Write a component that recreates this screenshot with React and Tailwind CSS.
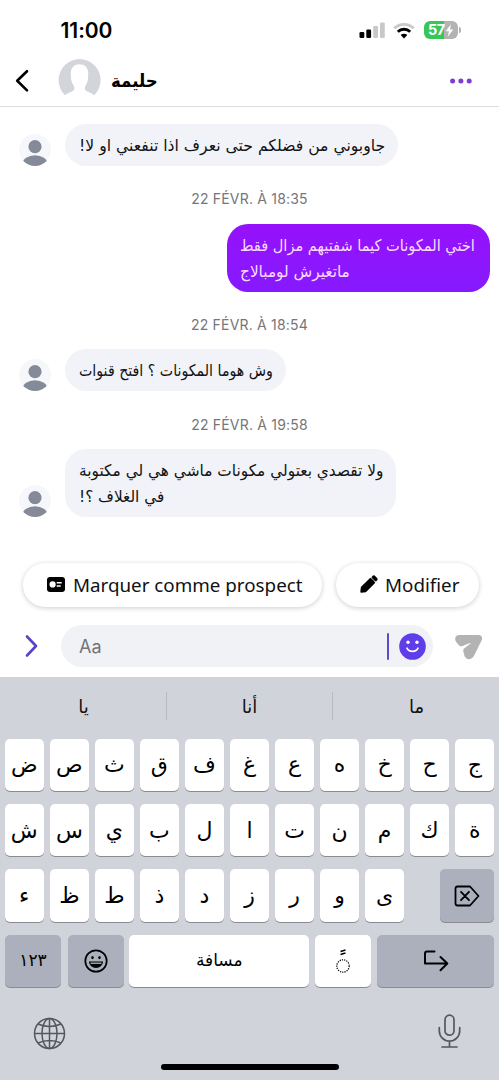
const AR = "font-['DejaVu_Sans',sans-serif]";

function Avatar() {
  return (
    <svg className="mb-0 h-8 w-8 shrink-0" viewBox="0 0 32 32">
      <defs>
        <clipPath id="avatarClip"><circle cx="16" cy="16" r="16" /></clipPath>
      </defs>
      <circle cx="16" cy="16" r="16" fill="#f5f7fa" />
      <g clipPath="url(#avatarClip)" fill="#858a98">
        <circle cx="16" cy="12.7" r="6.6" />
        <ellipse cx="16" cy="30" rx="12.5" ry="8.8" />
      </g>
    </svg>
  );
}

function Line({ children, className }) {
  return (
    <span dir="rtl" className={`block w-max origin-left whitespace-nowrap ${className}`}>{children}</span>
  );
}

function Stamp({ children, className }) {
  return (
    <div className={`flex h-5 items-center justify-center font-[Inter,sans-serif] text-[14px] tracking-[0.2px] text-[#75767a] ${className}`}>
      {children}
    </div>
  );
}

function Incoming({ children, className, bubble }) {
  return (
    <div className={`flex items-end gap-[14px] pl-[19px] ${className}`}>
      <Avatar />
      <div className={`flex flex-col items-start rounded-[21px] bg-[#f2f3f8] px-[14px] pt-[2px] text-[#111214] ${bubble}`}>{children}</div>
    </div>
  );
}

function Key({ children, className = "", inner = "", tone = "bg-white" }) {
  return (
    <div className={`flex h-[52.5px] items-center justify-center rounded-[5px] text-[22px] text-black shadow-[0_1px_0_#898b91] ${tone} ${className}`}>
      <span className={inner}>{children}</span>
    </div>
  );
}

const GRAY = "bg-[#abb0bc]";
const ROW1 = ["ض", "ص", "ث", "ق", "ف", "غ", "ع", "ه", "خ", "ح", "ج"];
const ROW2 = ["ش", "س", "ي", "ب", "ل", "ا", "ت", "ن", "م", "ك", "ة"];
const ROW3 = ["ء", "ظ", "ط", "ذ", "د", "ز", "ر", "و", "ى"];

export default function App() {
  return (
    <div className={`flex h-[1080px] w-[499px] flex-col overflow-hidden bg-white ${AR}`}>
      <div className="flex h-[60px] shrink-0 items-center justify-between pl-[60.5px] pr-[38px]">
        <span className="font-[Inter,sans-serif] text-[21px] font-semibold leading-none tracking-[-0.05px] text-black">11:00</span>
        <div className="flex items-center">
          <svg width="27" height="18" viewBox="0 0 27 18">
            <rect x="0.5" y="11" width="4.8" height="6" rx="1.2" fill="#000" />
            <rect x="7.3" y="8.5" width="4.8" height="8.5" rx="1.2" fill="#000" />
            <rect x="14.2" y="5" width="4.8" height="12" rx="1.2" fill="#c8c8c8" />
            <rect x="21" y="1.5" width="4.8" height="15.5" rx="1.2" fill="#c8c8c8" />
          </svg>
          <svg className="ml-[7px]" width="22" height="17" viewBox="0 0 22 17">
            <path d="M1.4 6.2a13.8 13.8 0 0 1 19.2 0" fill="none" stroke="#c8c8c8" strokeWidth="2.7" />
            <path d="M4.8 9.8a8.8 8.8 0 0 1 12.4 0" fill="none" stroke="#000" strokeWidth="2.8" />
            <path d="M11 16.4 7.7 13.1a4.7 4.7 0 0 1 6.6 0z" fill="#000" />
          </svg>
          <div className="ml-[9px] flex h-[18px] w-[34px] items-center overflow-hidden rounded-[6px] bg-linear-to-r from-[#36c759] from-58% to-[#b3b3b3] to-58% pl-[4px]">
            <span className="font-[Inter,sans-serif] text-[14.5px] font-bold leading-none tracking-[-0.4px] text-white">57</span>
            <svg width="9" height="13" viewBox="0 0 10 14"><path d="M6.5 0 .8 7.8h3.6L3 14l6.2-8.2H5.6z" fill="#fff" /></svg>
          </div>
          <div className="ml-px h-[6px] w-[2px] rounded-r-full bg-[#b3b3b3]" />
        </div>
      </div>

      <div className="flex h-[47px] shrink-0 items-start border-b border-[#dcdde0] pl-[14px] pr-[27px]">
        <svg className="mt-[9px]" width="16" height="24" viewBox="0 0 16 24">
          <path d="M13 2.2 3.2 11.8 13 21.4" fill="none" stroke="#000" strokeWidth="2.6" strokeLinecap="round" strokeLinejoin="round" />
        </svg>
        <svg className="ml-[28px] -mt-px" width="43" height="43" viewBox="0 0 43 43">
          <path d="M7 36.2A21 21 0 1 1 36.2 36.2C33.5 33.5 29.5 33 27.5 31.2C26.3 30 26.6 27.7 27.7 26.2C29.5 24 30.3 20.5 30.2 14C30.1 8 26.5 5.2 21.5 5.2S12.9 8 12.8 14C12.7 20.5 13.7 24 15.5 26.2C16.6 27.7 16.9 30 15.7 31.2C13.7 33 9.7 33.5 7 36.2Z" fill="#d2d5da" />
        </svg>
        <div className="ml-[10px] flex h-[40px] items-center text-[18px] font-bold text-black">
          <Line className="scale-x-[0.92]">حليمة</Line>
        </div>
        <svg className="ml-auto mt-[18px]" width="22" height="6" viewBox="0 0 22 6" fill="#7d3cd6">
          <circle cx="2.6" cy="3" r="2.5" /><circle cx="10.9" cy="3" r="2.5" /><circle cx="19.2" cy="3" r="2.5" />
        </svg>
      </div>

      <div className="flex h-[456px] shrink-0 flex-col">
        <Incoming className="mt-[17px]" bubble="h-[42px] w-[333px] justify-center">
          <Line className="scale-x-[0.977] text-[16px] leading-[26px]">جاوبوني من فضلكم حتى نعرف اذا تنفعني او لا!</Line>
        </Incoming>
        <Stamp className="mt-[22px]">22 FÉVR. À 18:35</Stamp>
        <div className="mr-[9px] mt-[16px] flex h-[68px] w-[263px] flex-col justify-center self-end rounded-[21px] bg-linear-to-b from-[#9610fb] to-[#8619ff] px-[13px] pt-[2px] text-[#f7dcff]">
          <Line className="scale-x-[0.91] text-[16px] leading-[26px]">اختي المكونات كيما شفتيهم مزال فقط</Line>
          <Line className="scale-x-[0.957] text-[16px] leading-[26px]">ماتغيرش لومبالاج</Line>
        </div>
        <Stamp className="mt-[22px]">22 FÉVR. À 18:54</Stamp>
        <Incoming className="mt-[15px]" bubble="h-[42px] w-[221px] justify-center">
          <Line className="scale-x-[0.886] text-[16px] leading-[26px]">وش هوما المكونات ؟ افتح قنوات</Line>
        </Incoming>
        <Stamp className="mt-[23px]">22 FÉVR. À 19:58</Stamp>
        <Incoming className="mt-[15px]" bubble="h-[68px] w-[331px] justify-center">
          <Line className="scale-x-[0.96] text-[16px] leading-[26px]">ولا تقصدي بعتولي مكونات ماشي هي لي مكتوبة</Line>
          <Line className="scale-x-[0.955] text-[16px] leading-[26px]">في الغلاف ؟!</Line>
        </Incoming>
      </div>

      <div className="flex h-[44px] shrink-0 gap-[14px] pl-[23px] font-['Noto_Sans',sans-serif] text-[18.8px] text-[#101114]">
        <div className="flex w-[299px] items-center rounded-full bg-white pl-[24px] shadow-[0_1px_5px_rgba(0,0,0,0.2)]">
          <svg className="-mt-px" width="18" height="15" viewBox="0 0 18 15">
            <rect width="18" height="15" rx="3" fill="#000" />
            <circle cx="5.6" cy="7.4" r="3.1" fill="#fff" />
            <path d="M9.7 5.800h5M9.7 9h4" stroke="#fff" strokeWidth="1.4" />
          </svg>
          <span className="ml-[8px] whitespace-nowrap">Marquer comme prospect</span>
        </div>
        <div className="flex w-[143px] items-center rounded-full bg-white pl-[24px] shadow-[0_1px_5px_rgba(0,0,0,0.2)]">
          <svg className="-mt-[2px]" width="18" height="18" viewBox="0 0 18 18">
            <path d="M1.2 16.8 1.7 12.5 10.4 3.8 14.2 7.600 5.5 16.300z" fill="#000" stroke="#000" strokeWidth="1.8" strokeLinejoin="round" />
            <path d="m13.8 2.700 1.500 1.500" stroke="#000" strokeWidth="4.4" strokeLinecap="round" />
            <path d="m11 2.300 4.700 4.700" stroke="#fff" strokeWidth="0.5" />
          </svg>
          <span className="ml-[7px]">Modifier</span>
        </div>
      </div>

      <div className="mt-[18px] flex h-[52px] shrink-0 items-start pl-[24px]">
        <svg className="mt-[9px]" width="14" height="24" viewBox="0 0 14 24">
          <path d="m3 2.500 9 9.500-9 9.500" fill="none" stroke="#5a43c9" strokeWidth="2.6" strokeLinecap="round" strokeLinejoin="round" />
        </svg>
        <div className="ml-[23px] flex h-[42px] w-[372px] items-center rounded-full bg-[#f1f2f6] pl-[18px] pr-[7px]">
          <span className="font-[Inter,sans-serif] text-[18px] text-[#72747a]">Aa</span>
          <div className="ml-auto h-[27px] w-[2px] rounded-full bg-[#6448ca]" />
          <svg className="ml-[10px]" width="27" height="27" viewBox="0 0 27 27">
            <circle cx="13.5" cy="13.5" r="13.3" fill="#5f3de8" />
            <circle cx="9" cy="9.2" r="1.7" fill="#fff" /><circle cx="18" cy="9.2" r="1.7" fill="#fff" />
            <path d="M8 15.200c1.800 4.200 9.200 4.200 11 0" fill="none" stroke="#fff" strokeWidth="1.7" strokeLinecap="round" />
          </svg>
        </div>
        <svg className="ml-[22px] mt-[9px]" width="28" height="26" viewBox="0 0 28 26">
          <path d="M4 1H23.500C26.500 1 28 3.500 26.700 6.200L19 21.800C16.500 26.400 11 26 9.500 22L8.300 17.300C8 15.600 8.600 14.800 10 13.800L15.500 9.500C15.800 9.100 15.400 8.800 14.900 9L7.500 12.100C5.700 12.700 4.800 12.200 3.700 11L1.200 8C-1 4.800 .5 1 4 1Z" fill="#b3b3b3" />
        </svg>
      </div>

      <div className="flex h-[403px] shrink-0 flex-col bg-[#d1d3db] px-[5px]">
        <div className="flex h-[61.5px] items-start pt-[15px] text-[18px] text-[#111]">
          <div className="flex h-[28px] w-[162px] items-center justify-center border-r border-[#b9bbc2] pr-[4px]">يا</div>
          <div className="flex h-[28px] w-[166px] items-center justify-center border-r border-[#b9bbc2]">أنا</div>
          <div className="flex h-[28px] flex-1 items-center justify-center pl-[6px]">ما</div>
        </div>
        <div className="grid grid-cols-11 gap-x-[6.5px] gap-y-[12.9px]">
          {ROW1.map((k) => <Key key={k}>{k}</Key>)}
          {ROW2.map((k) => <Key key={k}>{k}</Key>)}
          {ROW3.map((k) => <Key key={k}>{k}</Key>)}
          <div className="col-span-2 flex justify-end">
            <Key className="w-[54px]" tone={GRAY}>
              <svg width="26" height="22" viewBox="0 0 26 22" fill="none" stroke="#000" strokeWidth="1.8" strokeLinejoin="round" strokeLinecap="round">
                <path d="M3.500 1.500H16L24.500 11 16 20.500H3.500Q1.500 20.500 1.500 18.500V3.500Q1.500 1.500 3.500 1.500zM7 6.800l8 8.400M15 6.800l-8 8.400" />
              </svg>
            </Key>
          </div>
        </div>
        <div className="mt-[12.9px] flex">
          <Key className="w-[56px]" tone={GRAY} inner="text-[17px]">١٢٣</Key>
          <Key className="ml-[7px] w-[56px]" tone={GRAY}>
            <svg width="24" height="24" viewBox="0 0 24 24">
              <circle cx="12" cy="12" r="10.7" fill="none" stroke="#000" strokeWidth="1.7" />
              <ellipse cx="8.5" cy="8.6" rx="1.2" ry="1.7" /><ellipse cx="15.5" cy="8.6" rx="1.2" ry="1.7" />
              <path d="M5 12.600h14c-.4 8.400-13.600 8.400-14 0z" />
              <path d="M6.500 14.200h11" stroke="#c5c8d0" strokeWidth="1.2" />
            </svg>
          </Key>
          <Key className="ml-[5.5px] w-[180px]" inner="text-[17px]">مسافة</Key>
          <Key className="ml-[6px] w-[56px]">
            <svg width="16" height="26" viewBox="0 0 16 26" fill="none" stroke="#000">
              <path d="m5.500 3.500 5-1.500M5.500 6.500l5-1.500" strokeWidth="1.4" />
              <circle cx="8" cy="18" r="6.2" strokeWidth="1.2" strokeDasharray="1.2 1.08" />
            </svg>
          </Key>
          <Key className="ml-[6px] w-[117px]" tone={GRAY}>
            <svg width="26" height="22" viewBox="0 0 26 22" fill="none" stroke="#000" strokeWidth="2" strokeLinecap="round" strokeLinejoin="round">
              <path d="M11.500 1.500H4Q2 1.500 2 3.500V13.500H24M17.500 7l6.800 6.500-6.800 6.800" />
            </svg>
          </Key>
        </div>
        <div className="mt-[26px] flex h-[40px] items-start justify-between pl-[28px] pr-[33px]">
          <svg className="mt-[4px]" width="33" height="33" viewBox="0 0 33 33" fill="none" stroke="#54575f" strokeWidth="1.5">
            <circle cx="16.5" cy="16.5" r="15" /><ellipse cx="16.5" cy="16.5" rx="7.5" ry="15" />
            <path d="M16.500 1.500v30M1.500 16.500h30M5 7q11.500 5 23 0M5 26q11.500-5 23 0" />
          </svg>
          <svg className="mt-px" width="23" height="35" viewBox="0 0 23 35" fill="none" stroke="#54575f" strokeWidth="1.7" strokeLinecap="round">
            <rect x="7" y="1.2" width="9" height="20" rx="4.5" />
            <path d="M1.300 13.500V17a10.200 10 0 0 0 20.400 0V13.500M11.500 27v6M4 33h15" />
          </svg>
        </div>
        <div className="mx-auto mt-[11px] h-[6px] w-[178px] rounded-full bg-black" />
      </div>
    </div>
  );
}
